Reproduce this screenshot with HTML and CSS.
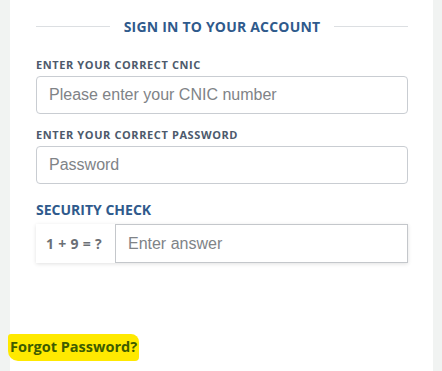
FILE: index.html
```html
<!DOCTYPE html>
<html>
<head>
<meta name="viewport" content="width=device-width, initial-scale=1">
<link rel="stylesheet" href="styles.css">
</head>
<body>

<div class="panel">
  <div class="title">
    <span class="rule"></span>
    <h3>SIGN IN TO YOUR ACCOUNT</h3>
    <span class="rule"></span>
  </div>

  <form class="login">
    <label for="cnic">ENTER YOUR CORRECT CNIC</label>
    <input type="text" id="cnic" placeholder="Please enter your CNIC number">

    <label for="password">ENTER YOUR CORRECT PASSWORD</label>
    <input type="password" id="password" placeholder="Password">

    <h4>SECURITY CHECK</h4>
    <div class="captcha">
      <span class="sum">1 + 9 = ?</span>
      <input type="text" id="answer" placeholder="Enter answer">
    </div>
  </form>

  <a class="forgot" href="#">Forgot Password?</a>
</div>

</body>
</html>
```

FILE: styles.css
```css
/* Page background */
html, body {
    margin: 0;
    height: 100%;
}

body {
    background: #f1f3f2;
    font-family: "Open Sans", "Liberation Sans", sans-serif;
    padding: 0 9px 0 10px;
    box-sizing: border-box;
}

/* White card */
.panel {
    background: #fff;
    height: 100%;
    padding: 17px 25px 0 26px;
    box-sizing: border-box;
    position: relative;
}

/* Heading with a line each side */
.title {
    display: flex;
    align-items: center;
    gap: 14px;
}

.title .rule {
    flex: 1;
    height: 1px;
    background: #dcdfe2;
}

.title h3 {
    margin: 0;
    font-size: 14px;
    font-weight: 700;
    color: #2f5a8c;
    letter-spacing: 0.2px;
}

/* Form */
.login {
    display: flex;
    flex-direction: column;
    margin-top: 21px;
}

.login label {
    font-size: 11px;
    font-weight: 700;
    color: #4d5a6c;
    letter-spacing: 0.6px;
    margin-bottom: 4px;
}

.login input {
    font-family: "Liberation Sans", Arial, sans-serif;
    font-size: 16px;
    color: #333;
    height: 38px;
    padding: 0 12px;
    border: 1px solid #c9cdd2;
    border-radius: 4px;
    box-sizing: border-box;
    margin-bottom: 13px;
}

.login input::placeholder {
    color: #808387;
}

.login h4 {
    margin: 3px 0 5px;
    font-size: 14px;
    font-weight: 700;
    color: #2f5a8c;
}

/* The sum box */
.captcha {
    display: flex;
    align-items: stretch;
    box-shadow: 0 1px 4px rgba(0, 0, 0, 0.12);
}

.captcha .sum {
    display: flex;
    align-items: center;
    padding: 0 13px 0 10px;
    font-size: 14px;
    font-weight: 700;
    color: #6b6f75;
    letter-spacing: 0.3px;
}

.captcha input {
    flex: 1;
    height: 39px;
    border-color: #c4c7cb;
    border-radius: 0;
    margin: 0;
}

/* Highlighted link at the bottom */
.forgot {
    position: absolute;
    left: -2px;
    top: 334px;
    padding: 3px 2px 5px 2px;
    font-size: 14.5px;
    font-weight: 700;
    color: #3d5c00;
    text-decoration: none;
    background: #ffe900;
    border-radius: 3px 8px 4px 10px;
}
```
